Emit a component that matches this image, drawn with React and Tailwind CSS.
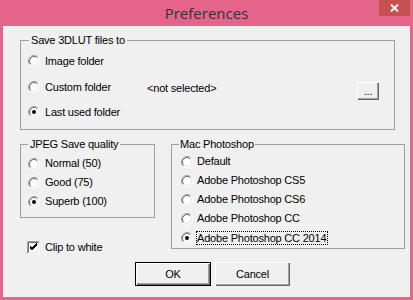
import React from "react";

const FONT = { fontFamily: '"Liberation Sans", Arial, sans-serif' };

function Radio({ checked }) {
  return (
    <svg width="12" height="12" viewBox="0 0 12 12" className="shrink-0">
      <circle cx="6" cy="6" r="5.5" fill="#ffffff" />
      <path d="M2.11 9.89 A5.5 5.5 0 0 1 9.89 2.11" fill="none" stroke="#a0a0a0" strokeWidth="1" />
      <path d="M9.89 2.11 A5.5 5.5 0 0 1 2.11 9.89" fill="none" stroke="#ffffff" strokeWidth="1" />
      <path d="M2.82 9.18 A4.5 4.5 0 0 1 9.18 2.82" fill="none" stroke="#696969" strokeWidth="1" />
      <path d="M9.18 2.82 A4.5 4.5 0 0 1 2.82 9.18" fill="none" stroke="#e3e3e3" strokeWidth="1" />
      {checked && <circle cx="6" cy="6" r="2" fill="#000000" />}
    </svg>
  );
}

function CheckBox({ checked }) {
  return (
    <svg width="13" height="13" viewBox="0 0 13 13" className="shrink-0">
      <rect x="0" y="0" width="13" height="13" fill="#ffffff" />
      <path d="M0.5 12.5 V0.5 H12.5" fill="none" stroke="#a0a0a0" />
      <path d="M1.5 11.5 V1.5 H11.5" fill="none" stroke="#696969" />
      <path d="M1.5 11.5 H11.5 V1.5" fill="none" stroke="#e3e3e3" />
      {checked && (
        <path d="M3 6 L5 8 L10 3 M3 7 L5 9 L10 4 M3 5 L5 7 L10 2" fill="none" stroke="#000000" strokeWidth="1" />
      )}
    </svg>
  );
}

function Option({ label, checked, gap = "gap-[5px]", h = "h-[19px]", focus }) {
  return (
    <div className={`flex items-center ${h} ${gap}`}>
      <Radio checked={checked} />
      {focus ? (
        <span className="-ml-[1px] border border-dotted border-black pr-[1px] leading-[12px]">{label}</span>
      ) : (
        <span>{label}</span>
      )}
    </div>
  );
}

function Button({ children, isDefault, className = "" }) {
  return (
    <button
      className={`flex items-center justify-center bg-[#f0f0f0] ${
        isDefault
          ? "border border-black shadow-[inset_1px_1px_0_#ffffff,inset_-1px_-1px_0_#696969,inset_-2px_-2px_0_#a0a0a0]"
          : "shadow-[inset_1px_1px_0_#ffffff,inset_-1px_-1px_0_#696969,inset_-2px_-2px_0_#a0a0a0]"
      } ${className}`}
    >
      {children}
    </button>
  );
}

export default function App() {
  return (
    <div className="w-[413px] h-[300px] bg-[#e5648c] flex flex-col overflow-hidden">
      <div className="relative h-[26px] flex items-center justify-center">
        <span
          className="text-[15px] leading-[20px] text-[#333333]"
          style={{ fontFamily: '"Open Sans", "Noto Sans", sans-serif' }}
        >
          Preferences
        </span>
        <div className="absolute right-[3px] top-0 w-[31px] h-[16px] bg-[#c75050] flex items-center justify-center">
          <svg width="9" height="8" viewBox="0 0 9 8">
            <path d="M1 0.5 L8 7.5 M8 0.5 L1 7.5" stroke="#ffffff" strokeWidth="1.8" />
          </svg>
        </div>
      </div>

      <div
        className="mx-[3px] h-[271px] bg-[#f0f0f0] text-black text-[11px] tracking-[-0.2px] leading-[13px] flex flex-col"
        style={FONT}
      >
        <fieldset className="mt-[7px] ml-[17px] w-[375px] border border-[#a0a0a0] px-[7px] pb-[7px]">
          <legend className="ml-[1px] px-[2px] leading-[14px]">Save 3DLUT files to</legend>
          <div className="mt-[4px]">
            <Option label="Image folder" h="h-[20px]" />
          </div>
          <div className="mt-[6px] flex items-center h-[20px]">
            <div className="w-[119px]">
              <Option label="Custom folder" h="h-[20px]" />
            </div>
            <span className="translate-y-[1px]">&lt;not selected&gt;</span>
            <Button className="ml-auto mr-[8px] w-[22px] h-[18px] relative top-[4px]">...</Button>
          </div>
          <div className="mt-[5px]">
            <Option label="Last used folder" checked h="h-[20px]" />
          </div>
        </fieldset>

        <div className="mt-[7px] flex items-start">
          <div className="ml-[17px] w-[135px] flex flex-col">
            <fieldset className="border border-[#a0a0a0] px-[7px] pb-[6px]">
              <legend className="px-[2px] leading-[14px]">JPEG Save quality</legend>
              <div className="mt-[3px]">
                <Option label="Normal (50)" />
                <Option label="Good (75)" />
                <Option label="Superb (100)" checked />
              </div>
            </fieldset>
            <div className="mt-[21px] pl-[7px] h-[16px] flex items-center gap-[5px]">
              <CheckBox checked />
              <span>Clip to white</span>
            </div>
          </div>

          <fieldset className="ml-[16px] w-[234px] border border-[#a0a0a0] pl-[9px] pb-[1px]">
            <legend className="-ml-[2px] px-[1px] leading-[14px]">Mac Photoshop</legend>
            <div className="mt-[1px]">
              <Option label="Default" gap="gap-[4px]" />
              <Option label="Adobe Photoshop CS5" gap="gap-[4px]" />
              <Option label="Adobe Photoshop CS6" gap="gap-[4px]" />
              <Option label="Adobe Photoshop CC" gap="gap-[4px]" />
              <Option label="Adobe Photoshop CC 2014" gap="gap-[4px]" checked focus />
            </div>
          </fieldset>
        </div>

        <div className="mt-[7px] ml-[132px] flex gap-[4px]">
          <Button isDefault className="w-[76px] h-[24px]">OK</Button>
          <Button className="w-[75px] h-[24px]">Cancel</Button>
        </div>
      </div>
    </div>
  );
}
